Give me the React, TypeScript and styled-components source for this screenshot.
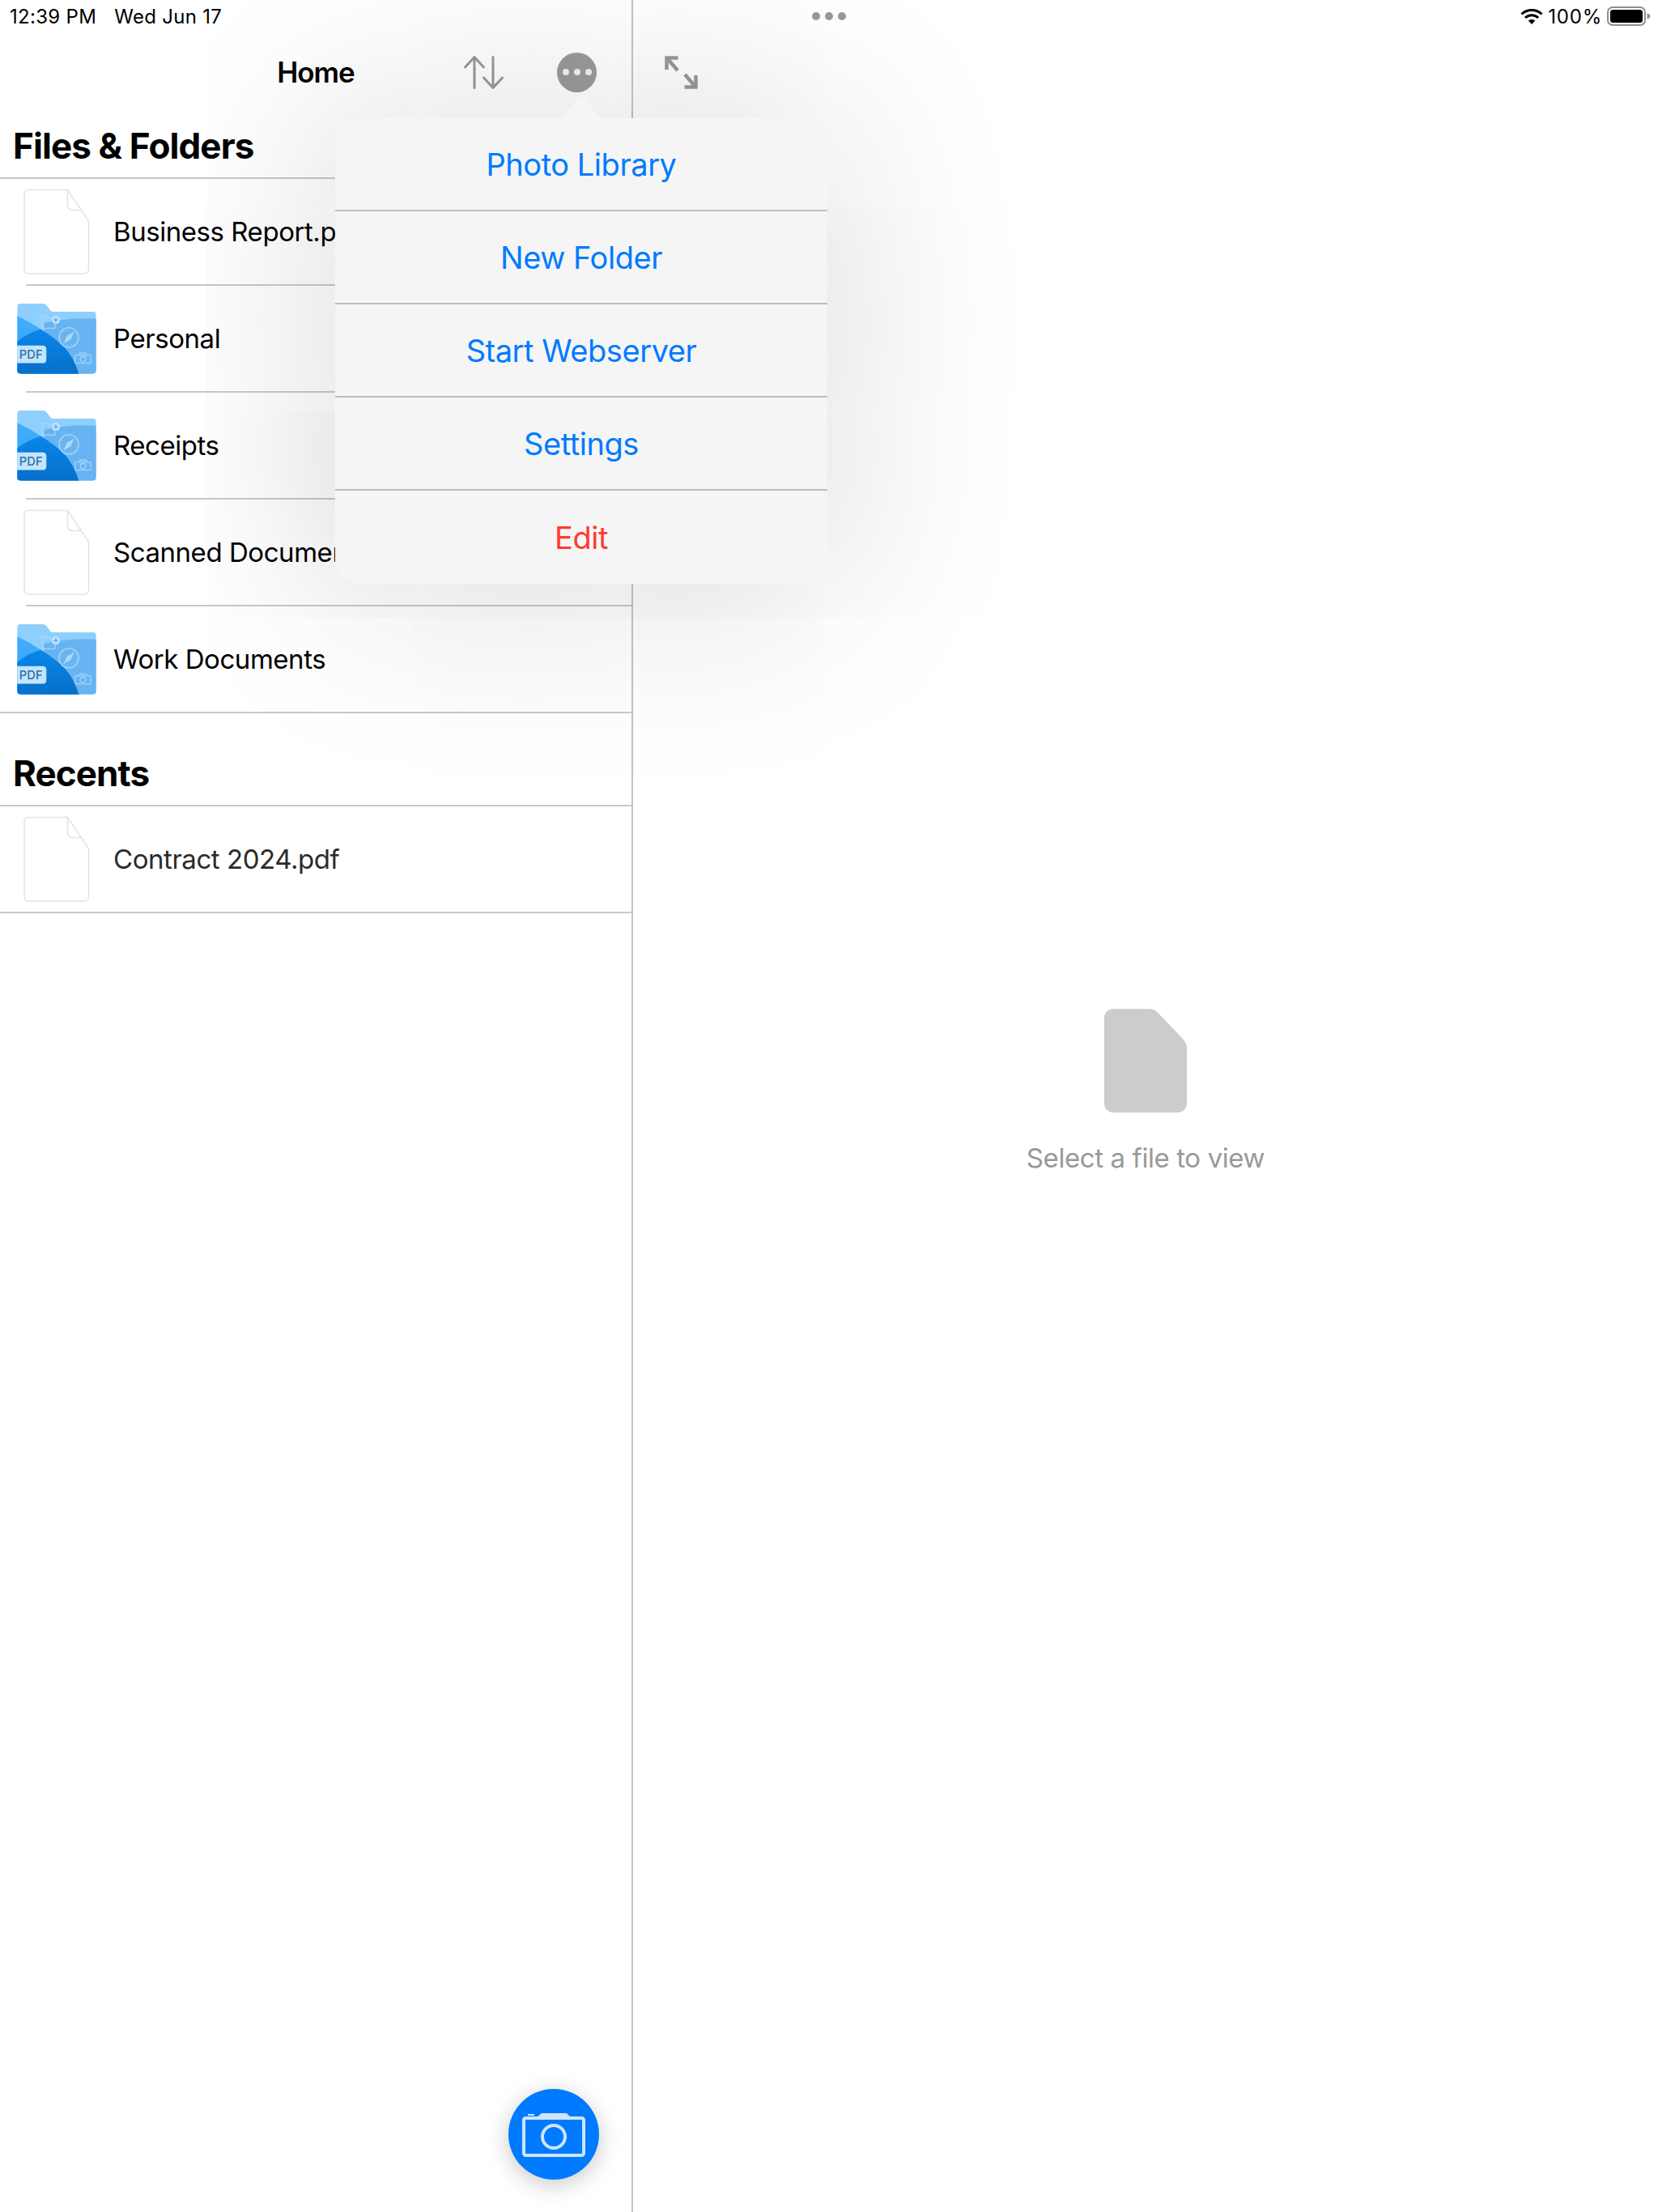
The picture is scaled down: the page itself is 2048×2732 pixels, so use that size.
import styled, { createGlobalStyle } from 'styled-components'

const GlobalStyle = createGlobalStyle`
  html, body {
    margin: 0;
    padding: 0;
    background: #fff;
    font-family: Inter, "Noto Sans", "Liberation Sans", sans-serif;
  }
`

function SortIcon() {
  return (
    <svg width="50" height="41" viewBox="0 0 50 41" fill="none" stroke="#999" strokeWidth="3" strokeLinecap="round" strokeLinejoin="round">
      <path d="M13 39.500V1.500M1.500 14 13 1.500 24.500 14" />
      <path d="M36 1.500V39.500M24.500 27 36 39.500 47.500 27" />
    </svg>
  )
}

function ExpandIcon() {
  return (
    <svg width="41" height="41" viewBox="0 0 41 41" fill="none" stroke="#999" strokeWidth="4.500">
      <path d="M16.500 2.500H2.500V17" />
      <path d="M4 4 16 18" />
      <path d="M24.500 38.500H38.500V24" />
      <path d="M37 37 25 23" />
    </svg>
  )
}

function WifiIcon() {
  return (
    <svg width="28" height="20" viewBox="0 0 28 20" fill="none" stroke="#000" strokeWidth="3">
      <path d="M1.500 7.500C8.500 .8 19.500 .8 26.500 7.500" />
      <path d="M6 12C10.500 7.800 17.500 7.800 22 12" />
      <path d="M14 20 9.800 15.600C12 13.500 16 13.500 18.200 15.600Z" fill="#000" stroke="none" />
    </svg>
  )
}

function BatteryIcon() {
  return (
    <svg width="54" height="24" viewBox="0 0 54 24">
      <rect x="1" y="1" width="46" height="22" rx="6" fill="none" stroke="#8e8e8e" strokeWidth="2" />
      <rect x="4" y="4" width="40" height="16" rx="3.500" fill="#000" />
      <path d="M49.500 8.500c2.500.5 4 1.800 4 3.500s-1.500 3-4 3.500z" fill="#8e8e8e" />
    </svg>
  )
}

function BlankFileIcon() {
  return (
    <svg width="82" height="107" viewBox="0 0 82 107" fill="#fff" stroke="#e3e3e3" strokeWidth="1.500">
      <path d="M6 1.500H54.500L80.500 40V100a5 5 0 0 1-5 5H6a5 5 0 0 1-5-5V6.500a5 5 0 0 1 5-5Z" />
      <path d="M54.500 1.500V21a5.500 5.500 0 0 0 5.500 5.500H71.500" fill="none" />
    </svg>
  )
}

function FolderIcon() {
  return (
    <svg width="98" height="87" viewBox="0 0 292 260">
      <defs>
        <clipPath id="folderShape">
          <path d="M12 0H96Q104 0 110 8L122 24Q125 30 132 30H280Q292 30 292 42V246Q292 259 278 259H14Q0 259 0 246V12Q0 0 12 0Z" />
        </clipPath>
        <linearGradient id="folderDark" x1="0" y1="0" x2="0" y2="1">
          <stop offset="0" stopColor="#0a86ea" />
          <stop offset="1" stopColor="#0670c9" />
        </linearGradient>
        <linearGradient id="folderBand" x1="0" y1="0" x2="0" y2="1">
          <stop offset="0" stopColor="#45aefc" />
          <stop offset="1" stopColor="#2a9ff8" />
        </linearGradient>
      </defs>
      <g clipPath="url(#folderShape)">
        <rect width="292" height="260" fill="#8fcffd" />
        <path d="M100 72Q190 50 292 56V260H100Z" fill="#68b3f1" />
        <path d="M0 45Q48 68 88 95Q135 124 173 160Q210 200 228 260H0Z" fill="url(#folderBand)" />
        <path d="M0 140Q40 108 88 95Q135 124 173 160Q210 200 228 260H0Z" fill="url(#folderDark)" />
      </g>
      <g fill="none" stroke="#a9d8fb" strokeWidth="4" opacity=".9">
        <path d="M92 47h24l6 8h18v36H92Z" />
        <circle cx="191" cy="125" r="36" strokeWidth="5" />
        <circle cx="191" cy="125" r="28" strokeDasharray="2 9" strokeWidth="4" />
        <rect x="214" y="190" width="58" height="30" rx="3" />
        <circle cx="243" cy="205" r="10" />
        <path d="M228 190l3-7h24l3 7" />
      </g>
      <path d="M171 147 184 118 211 103 198 132Z" fill="#a9d8fb" />
      <circle cx="143" cy="60" r="15" fill="#c2e5ff" />
      <path d="M143 51v18M134 60h18" stroke="#55a9ee" strokeWidth="4" />
      <path d="M0 155H94Q108 155 108 169V206Q108 220 94 220H0Z" fill="#c2e5ff" />
      <text x="51" y="204" textAnchor="middle" fontSize="44" fontFamily="Inter, sans-serif" fontWeight="500" fill="#2f6fa5">PDF</text>
    </svg>
  )
}

function PlaceholderFileIcon() {
  return (
    <svg width="102" height="128" viewBox="0 0 102 128">
      <path d="M11 0H54C59 0 63 1.500 66 4.500L97 37C100 40 102 44 102 49V117C102 123 97 128 91 128H11C5 128 0 123 0 117V11C0 5 5 0 11 0Z" fill="#ccc" />
    </svg>
  )
}

function CameraIcon() {
  return (
    <svg width="78" height="56" viewBox="0 0 78 56" fill="none" stroke="#cfe4ff" strokeWidth="4">
      <rect x="2" y="8" width="74" height="46" rx="2.500" />
      <circle cx="39" cy="31" r="14" />
      <path d="M17 8 24 2H55L61 8Z" fill="#cfe4ff" stroke="none" />
      <path d="M7 4H15" strokeWidth="2" />
    </svg>
  )
}

type Item = { name: string; kind: 'file' | 'folder' }

const files: Item[] = [
  { name: 'Business Report.pdf', kind: 'file' },
  { name: 'Personal', kind: 'folder' },
  { name: 'Receipts', kind: 'folder' },
  { name: 'Scanned Documents.pdf', kind: 'file' },
  { name: 'Work Documents', kind: 'folder' },
]

const menu = [
  { label: 'Photo Library' },
  { label: 'New Folder' },
  { label: 'Start Webserver' },
  { label: 'Settings' },
  { label: 'Edit', danger: true },
]

export default function App() {
  return (
    <Page>
      <GlobalStyle />

      {/* Left column */}
      <Sidebar>
        <StatusLeft>
          <span>12:39 PM</span>
          <span>Wed Jun 17</span>
        </StatusLeft>

        <NavBar>
          <span />
          <NavTitle>Home</NavTitle>
          <NavActions>
            <SortIcon />
            <MoreButton>
              <MoreDot />
              <MoreDot />
              <MoreDot />
            </MoreButton>
          </NavActions>
        </NavBar>

        <SectionHeading $height={81}>Files &amp; Folders</SectionHeading>
        <Divider />
        {files.map((item, i) => (
          <div key={item.name}>
            <Row>
              <IconSlot>{item.kind === 'file' ? <BlankFileIcon /> : <FolderIcon />}</IconSlot>
              <RowLabel>{item.name}</RowLabel>
            </Row>
            <Divider $inset={i < files.length - 1} />
          </div>
        ))}

        <SectionHeading $height={113}>Recents</SectionHeading>
        <Divider />
        <Row>
          <IconSlot><BlankFileIcon /></IconSlot>
          <RowLabel $dim>Contract 2024.pdf</RowLabel>
        </Row>
        <Divider />

        <CameraButton>
          <CameraIcon />
        </CameraButton>
      </Sidebar>

      {/* Right column */}
      <Detail>
        <StatusRight>
          <WindowDots>
            <WindowDot />
            <WindowDot />
            <WindowDot />
          </WindowDots>
          <StatusIcons>
            <WifiIcon />
            <span>100%</span>
            <BatteryIcon />
          </StatusIcons>
        </StatusRight>

        <DetailToolbar>
          <ExpandIcon />
        </DetailToolbar>

        <Placeholder>
          <PlaceholderFileIcon />
          <PlaceholderText>Select a file to view</PlaceholderText>
        </Placeholder>
      </Detail>

      {/* Popover menu */}
      <Popover>
        <PopoverArrow width="56" height="28" viewBox="0 0 56 28">
          <path d="M0 28C4 27 6 25 8 22L24 2C26 0 30 0 32 2L48 22C50 25 52 27 56 28Z" fill="#f5f5f5" />
        </PopoverArrow>
        {menu.map((m) => (
          <MenuItem key={m.label} $danger={m.danger}>{m.label}</MenuItem>
        ))}
      </Popover>
    </Page>
  )
}

const Page = styled.div`
  position: relative;
  display: flex;
  width: 2048px;
  height: 2732px;
  overflow: hidden;
  background: #fff;
  color: #000;
`

const Sidebar = styled.div`
  position: relative;
  width: 780px;
  flex-shrink: 0;
  border-right: 2px solid #c4c4c4;
`

const StatusLeft = styled.div`
  display: flex;
  gap: 22px;
  height: 40px;
  padding-left: 12px;
  align-items: center;
  font-size: 24px;
  letter-spacing: 0.3px;
`

const NavBar = styled.div`
  display: grid;
  grid-template-columns: 1fr auto 1fr;
  align-items: center;
  height: 98px;
`

const NavTitle = styled.div`
  font-size: 35px;
  font-weight: 600;
  letter-spacing: -1px;
`

const NavActions = styled.div`
  display: flex;
  justify-content: flex-end;
  align-items: center;
  gap: 65px;
  padding-right: 43px;
`

const MoreButton = styled.div`
  display: flex;
  align-items: center;
  justify-content: center;
  gap: 6px;
  width: 49px;
  height: 49px;
  border-radius: 50%;
  background: #9b9b9b;
`

const MoreDot = styled.span`
  width: 8px;
  height: 8px;
  border-radius: 50%;
  background: #f1f1f1;
`

const SectionHeading = styled.div<{ $height: number }>`
  display: flex;
  align-items: flex-end;
  box-sizing: border-box;
  height: ${(p) => p.$height}px;
  padding: 0 0 13px 16px;
  font-size: 44px;
  line-height: 52px;
  font-weight: 700;
  letter-spacing: -0.9px;
`

const Divider = styled.div<{ $inset?: boolean }>`
  height: 2px;
  margin-left: ${(p) => (p.$inset ? 32 : 0)}px;
  background: #c9c9c9;
`

const Row = styled.div`
  display: flex;
  align-items: center;
  height: 130px;
  overflow: hidden;
`

const IconSlot = styled.div`
  display: flex;
  justify-content: center;
  align-items: center;
  width: 140px;
  flex-shrink: 0;
`

const RowLabel = styled.div<{ $dim?: boolean }>`
  font-size: 33px;
  letter-spacing: -0.45px;
  white-space: nowrap;
  color: ${(p) => (p.$dim ? '#2b2b2b' : '#000')};
`

const CameraButton = styled.div`
  position: absolute;
  right: 40px;
  bottom: 40px;
  display: flex;
  align-items: center;
  justify-content: center;
  width: 112px;
  height: 112px;
  border-radius: 50%;
  background: #007aff;
  box-shadow: 0 6px 28px rgba(0, 0, 0, 0.22);
`

const Detail = styled.div`
  display: flex;
  flex-direction: column;
  flex: 1;
  min-width: 0;
`

const StatusRight = styled.div`
  display: flex;
  align-items: center;
  justify-content: space-between;
  height: 40px;
  padding: 0 9px 0 221px;
  font-size: 24px;
`

const WindowDots = styled.div`
  display: flex;
  gap: 6px;
`

const WindowDot = styled.span`
  width: 10px;
  height: 10px;
  border-radius: 50%;
  background: #999;
`

const StatusIcons = styled.div`
  display: flex;
  align-items: center;
  gap: 6px;
  letter-spacing: 0.8px;
`

const DetailToolbar = styled.div`
  display: flex;
  align-items: center;
  height: 98px;
  padding-left: 39px;
`

const Placeholder = styled.div`
  display: flex;
  flex-direction: column;
  align-items: center;
  justify-content: center;
  flex: 1;
  gap: 35px;
  padding-bottom: 174px;
`

const PlaceholderText = styled.div`
  font-size: 33px;
  line-height: 42px;
  letter-spacing: -0.4px;
  color: #999;
`

const Popover = styled.div`
  position: absolute;
  top: 146px;
  left: 414px;
  width: 608px;
  border-radius: 28px;
  background: #f5f5f5;
  box-shadow: 0 8px 240px rgba(0, 0, 0, 0.2);
`

const PopoverArrow = styled.svg`
  position: absolute;
  top: -27px;
  left: 276px;
`

const MenuItem = styled.div<{ $danger?: boolean }>`
  display: flex;
  align-items: center;
  justify-content: center;
  box-sizing: border-box;
  height: 115px;
  font-size: 38px;
  letter-spacing: -0.45px;
  color: ${(p) => (p.$danger ? '#ff3b30' : '#007aff')};
  border-bottom: 2px solid #bcbcbc;

  &:last-child {
    border-bottom: 0;
  }
`
